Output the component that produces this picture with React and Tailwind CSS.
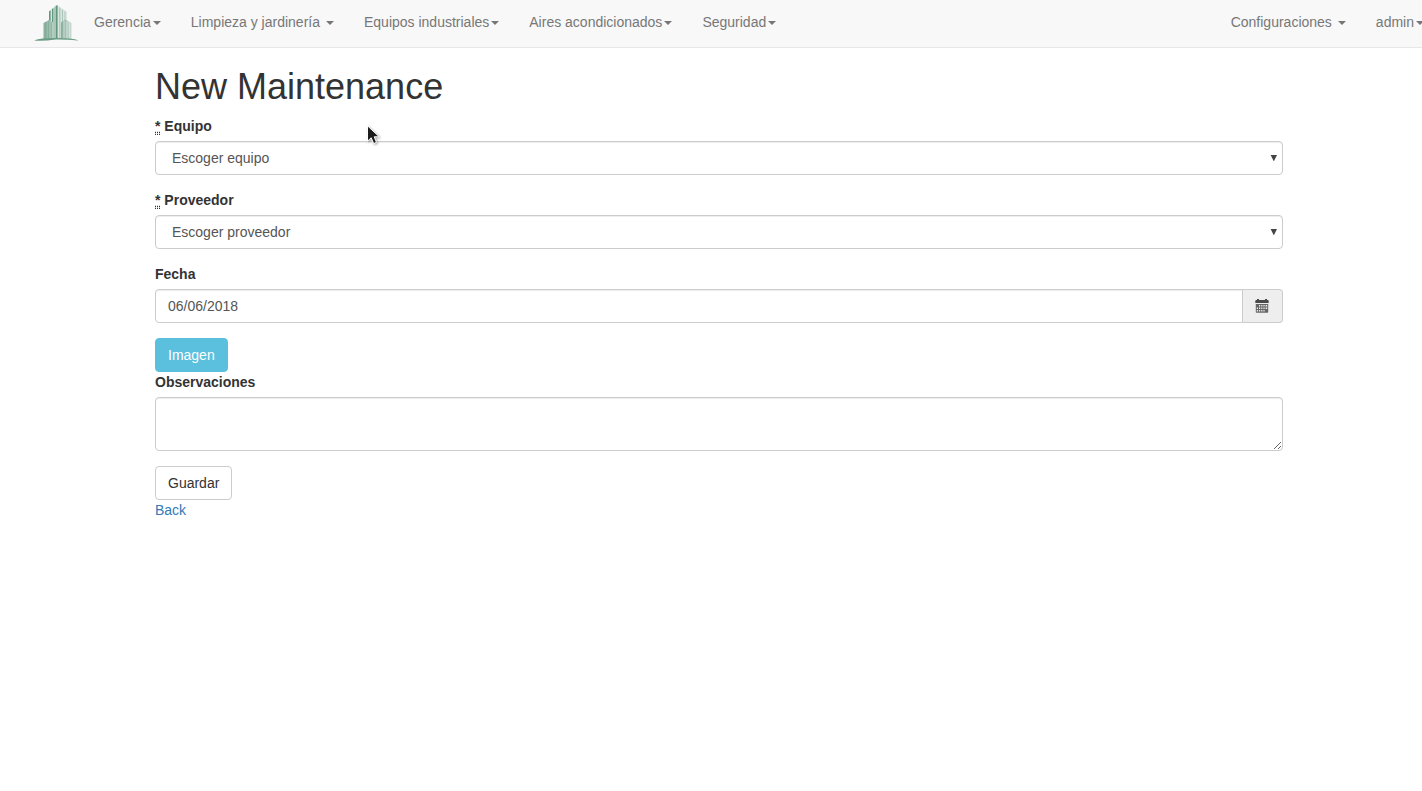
import React from "react";

function Caret({ spaced }) {
  return (
    <span
      className={
        (spaced ? "ml-[6px]" : "ml-[2px]") +
        " inline-block h-0 w-0 border-x-4 border-t-4 border-x-transparent border-t-[#777] align-middle"
      }
    />
  );
}

function NavItem({ label, spaced }) {
  return (
    <a href="#" className="block whitespace-nowrap px-[15px] pt-3 pb-[15px] text-[#777]">
      {label}
      <Caret spaced={spaced} />
    </a>
  );
}

function Logo() {
  return (
    <svg width="45" height="36" viewBox="0 0 45 37" preserveAspectRatio="none" className="block">
      <defs>
        <linearGradient id="left" x1="0" x2="1">
          <stop offset="0" stopColor="#86ae9b" />
          <stop offset="1" stopColor="#b9d0c5" />
        </linearGradient>
        <linearGradient id="right" x1="0" x2="1">
          <stop offset="0" stopColor="#86ae9b" />
          <stop offset="1" stopColor="#cbdcd4" />
        </linearGradient>
      </defs>
      <path d="M15 35V6.5L22.5 0L33 7V35Z" fill="#dbe6e1" />
      <path d="M15 35V6.8L16.6 5.5V35ZM18 35V4.2L19.4 3V35ZM21.6 35V1L23.6 0V35Z" fill="#60977d" />
      <path d="M20 35V2.5L21 2V35ZM25.2 35V2L26.4 3V35ZM28 35V4L29 5V35ZM30.5 35V6L31.4 7V35Z" fill="#a9c6b8" />
      <path d="M9.5 35.5V18.5L15 15.5L19.5 18V35Z" fill="url(#left)" />
      <path d="M11.8 35V17.5M14.6 35V16M17.2 35V17.5" stroke="#76a48e" strokeWidth="0.7" />
      <path d="M27 35V18L31.5 15L37.5 18.5V35.5Z" fill="url(#right)" />
      <path d="M30 35V16.5M33 35V16.5M35.6 35V18" stroke="#e3ece8" strokeWidth="0.7" />
      <path d="M0 36.5Q7 33.9 22 34Q37 33.9 45 36.5Q34 35.4 22 35.5Q9 37.2 0 36.5Z" fill="#6b9d85" />
    </svg>
  );
}

function Label({ children, required }) {
  return (
    <label className="mb-[5px] block font-bold">
      {required && (
        <>
          <abbr title="required" className="cursor-help border-b border-dotted border-[#333] underline decoration-dotted">
            *
          </abbr>{" "}
        </>
      )}
      {children}
    </label>
  );
}

function Select({ text }) {
  return (
    <div className="relative mb-[15px]">
      <select className="block h-[34px] w-full appearance-none rounded border border-[#ccc] bg-white px-4 py-[6px] leading-5 text-[#555] shadow-[inset_0_1px_1px_rgba(0,0,0,0.075)]">
        <option>{text}</option>
      </select>
      <svg width="7" height="6" viewBox="0 0 7 6" className="pointer-events-none absolute top-[14px] right-[6px]">
        <path d="M0.6 0H7L4 6H3.6Z" fill="#444" />
      </svg>
    </div>
  );
}

function CalendarIcon() {
  return (
    <svg width="14" height="14" viewBox="0 0 14 14" fill="#666" className="mr-[2px]">
      <path d="M0.3 2Q0.3 1 1.3 1H2V0H4V1H10V0H12V1H12.7Q13.7 1 13.7 2V4H0.3Z" fill="#4a4a4a" />
      <path
        fillRule="evenodd"
        d="M0.8 5H13.2V13Q13.2 13.8 12.4 13.8H1.6Q0.8 13.8 0.8 13ZM4 6V7.6H5.2V6ZM6.2 6V7.6H7.4V6ZM8.4 6V7.6H9.6V6ZM10.6 6V7.6H12.2V6ZM1.8 8.5V10H3V8.5ZM4 8.5V10H5.2V8.5ZM6.2 8.5V10H7.4V8.5ZM8.4 8.5V10H9.6V8.5ZM10.6 8.5V10H12.2V8.5ZM1.8 11V12.6H3V11ZM4 11V12.6H5.2V11ZM6.2 11V12.6H7.4V11ZM8.4 11V12.6H9.6V11Z"
      />
    </svg>
  );
}

function Pointer() {
  return (
    <svg
      width="14"
      height="20"
      viewBox="0 0 14 20"
      className="pointer-events-none absolute top-[125px] left-[367px] drop-shadow-[1px_1px_1px_rgba(0,0,0,0.35)]"
    >
      <path d="M0.5 0.8V16.2L4.2 12.8L6.7 18.6L9.5 17.3L7.2 11.8H12.2Z" fill="#1c1c1c" stroke="#fff" strokeWidth="1" />
    </svg>
  );
}

export default function App() {
  return (
    <div className="relative min-h-screen overflow-hidden bg-white font-['Liberation_Sans',Arial,sans-serif] text-[14px] leading-5 text-[#333]">
      <nav className="flex h-12 border-b border-[#e7e7e7] bg-[#f8f8f8]">
        <a href="#" className="ml-[34px] block pt-[5px]">
          <Logo />
        </a>
        <div className="flex">
          <NavItem label="Gerencia" />
          <NavItem label="Limpieza y jardinería" spaced />
          <NavItem label="Equipos industriales" />
          <NavItem label="Aires acondicionados" />
          <NavItem label="Seguridad" />
        </div>
        <div className="-mr-[17px] ml-auto flex">
          <NavItem label="Configuraciones" spaced />
          <NavItem label="admin" />
        </div>
      </nav>

      <main className="ml-[155px] w-[1128px] pt-[19px]">
        <h1 className="mb-[9px] h-10 text-[36px] leading-10 font-medium">New Maintenance</h1>
        <form>
          <Label required>Equipo</Label>
          <Select text="Escoger equipo" />
          <Label required>Proveedor</Label>
          <Select text="Escoger proveedor" />
          <Label>Fecha</Label>
          <div className="mb-[15px] flex h-[34px]">
            <input
              type="text"
              defaultValue="06/06/2018"
              className="min-w-0 flex-1 rounded-l border border-[#ccc] bg-white px-3 py-[6px] text-[#555] shadow-[inset_0_1px_1px_rgba(0,0,0,0.075)]"
            />
            <span className="flex w-10 items-center justify-center rounded-r border border-l-0 border-[#ccc] bg-[#eee]">
              <CalendarIcon />
            </span>
          </div>
          <button type="button" className="block h-[34px] rounded border border-[#5bc0de] bg-[#5bc0de] px-3 text-white">
            Imagen
          </button>
          <Label>Observaciones</Label>
          <textarea className="mb-[15px] block h-[54px] w-full resize rounded border border-[#ccc] bg-white px-3 py-[6px] text-[#555] shadow-[inset_0_1px_1px_rgba(0,0,0,0.075)]" />
          <button type="button" className="block h-[34px] rounded border border-[#ccc] bg-white px-3 text-[#333]">
            Guardar
          </button>
        </form>
        <a href="#" className="block w-fit text-[#337ab7]">
          Back
        </a>
      </main>
      <Pointer />
    </div>
  );
}
